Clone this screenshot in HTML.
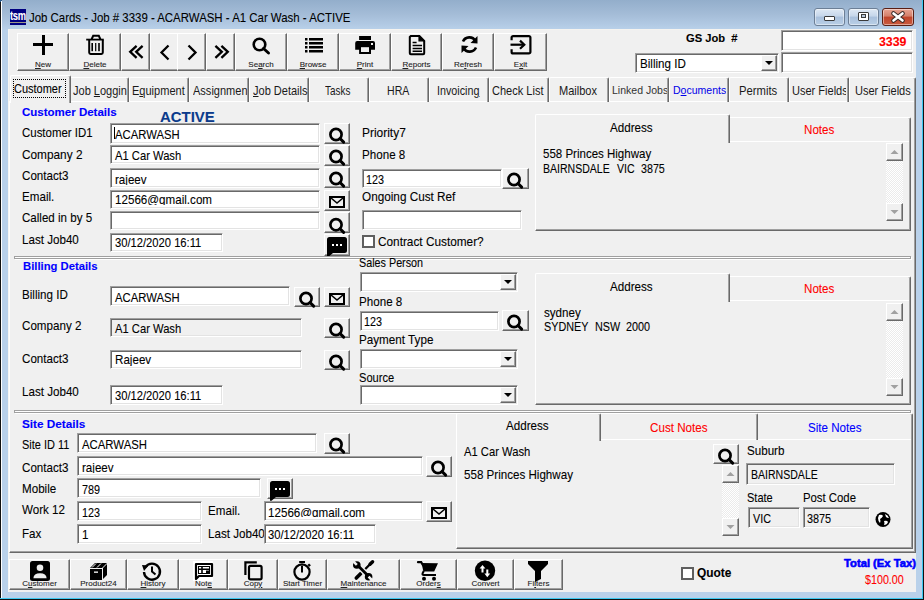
<!DOCTYPE html>
<html><head><meta charset="utf-8"><style>
html,body{margin:0;padding:0;width:924px;height:600px;overflow:hidden;background:#b9d1ea}
body{position:relative;font-family:"Liberation Sans", sans-serif}
body div, body span.t{position:absolute;box-sizing:border-box}
.t{white-space:pre;font-family:"Liberation Sans", sans-serif;-webkit-text-stroke:0.1px currentColor}
.rz{box-sizing:content-box!important;background:#f0f0f0;border:1px solid;border-color:#fff #696969 #696969 #fff;box-shadow:inset -1px -1px #a0a0a0}
.sk{box-sizing:content-box!important;border:1px solid;border-color:#a0a0a0 #fff #fff #a0a0a0;box-shadow:inset 1px 1px #696969, inset -1px -1px #e3e3e3}
.dith{background:repeating-conic-gradient(#fff 0 25%,#ebebeb 0 50%) 0 0/2px 2px}
svg{position:absolute}
</style></head><body>
<div style="left:0px;top:0px;width:924px;height:30px;background:linear-gradient(#93aecb,#a5bdd8 50%,#b9d1ea)"></div>
<div style="left:0px;top:30px;width:924px;height:570px;background:#b9d1ea"></div>
<div style="left:0px;top:0px;width:1px;height:600px;background:#111"></div>
<div style="left:0px;top:0px;width:2px;height:2px;background:#2c5d8e"></div>
<div style="left:1px;top:1px;width:1px;height:598px;background:#fff"></div>
<div style="left:922px;top:0px;width:1px;height:599px;background:#3cc8f0"></div>
<div style="left:923px;top:0px;width:1px;height:600px;background:#111"></div>
<div style="left:0px;top:598px;width:923px;height:1px;background:#3cc8f0"></div>
<div style="left:0px;top:599px;width:924px;height:1px;background:#111"></div>
<div style="left:10px;top:9px;width:16px;height:16px;background:#000080"></div>
<div style="left:10px;top:22px;width:16px;height:1px;background:#9c9888"></div>
<div style="left:10px;top:9px;width:16px;height:13px;overflow:hidden"><span class="t" style="left:0.3px;top:1px;font-size:12px;line-height:12px;color:#fff;font-weight:bold;letter-spacing:-0.4px;transform:scaleX(0.78);transform-origin:0 0">tsm</span></div>
<span class="t" style="left:29.30px;top:12px;font-size:12.53px;line-height:12.53px;color:#000;font-weight:normal;transform:scaleX(0.9126);transform-origin:0 0;">Job Cards - Job # 3339 - ACARWASH - A1 Car Wash - ACTIVE</span>
<div style="left:814px;top:8px;width:31px;height:18px;border:1px solid #6c7f96;border-radius:3px;background:linear-gradient(#dfe9f4,#c5d6ea 45%,#a9c0dc 50%,#b9cfe6 100%);box-shadow:inset 0 0 0 1px rgba(255,255,255,.45)"></div>
<div style="left:848px;top:8px;width:31px;height:18px;border:1px solid #6c7f96;border-radius:3px;background:linear-gradient(#dfe9f4,#c5d6ea 45%,#a9c0dc 50%,#b9cfe6 100%);box-shadow:inset 0 0 0 1px rgba(255,255,255,.45)"></div>
<div style="left:882px;top:8px;width:32px;height:18px;border:1px solid #5a1f14;border-radius:3px;background:linear-gradient(#e8a493,#d47f6a 45%,#c0442b 50%,#c85a3e 100%);box-shadow:inset 0 0 0 1px rgba(255,255,255,.45)"></div>
<div style="left:824px;top:16px;width:11px;height:5px;background:#fff;border:1px solid #3a3a3a;border-radius:1px"></div>
<div style="left:858px;top:12px;width:11px;height:9px;border:1px solid #3a3a3a;background:#fff;border-radius:1px"></div>
<div style="left:861px;top:14px;width:5px;height:4px;border:1px solid #3a3a3a;background:#b8c9dc"></div>
<svg style="position:absolute;left:889px;top:10px" width="18" height="14"><path d="M4.5,3.5 L13.5,10.5 M13.5,3.5 L4.5,10.5" stroke="#3a2a28" stroke-width="4.6" stroke-linecap="round"/><path d="M4.5,3.5 L13.5,10.5 M13.5,3.5 L4.5,10.5" stroke="#fff" stroke-width="2.6" stroke-linecap="round"/></svg>
<div style="left:8px;top:29px;width:908px;height:563px;background:#f0f0f0"></div>
<div style="left:8px;top:29px;width:1px;height:563px;background:#f7f6f3"></div>
<div style="left:8px;top:29px;width:908px;height:1px;background:#f5f3ef"></div>
<div class="rz" style="left:17px;top:33px;width:50px;height:36px;"></div>
<span class="t" style="left:35.00px;top:61px;font-size:8.00px;line-height:8.00px;color:#222;font-weight:normal;"><u>N</u>ew</span>
<div class="rz" style="left:69px;top:33px;width:50px;height:36px;"></div>
<span class="t" style="left:83.44px;top:61px;font-size:8.00px;line-height:8.00px;color:#222;font-weight:normal;"><u>D</u>elete</span>
<div class="rz" style="left:121px;top:33px;width:27px;height:36px;"></div>
<div class="rz" style="left:150px;top:33px;width:27px;height:36px;"></div>
<div class="rz" style="left:177px;top:33px;width:27px;height:36px;"></div>
<div class="rz" style="left:206px;top:33px;width:27px;height:36px;"></div>
<div class="rz" style="left:235px;top:33px;width:50px;height:36px;"></div>
<span class="t" style="left:248.33px;top:61px;font-size:8.00px;line-height:8.00px;color:#222;font-weight:normal;">Se<u>a</u>rch</span>
<div class="rz" style="left:287px;top:33px;width:50px;height:36px;"></div>
<span class="t" style="left:299.66px;top:61px;font-size:8.00px;line-height:8.00px;color:#222;font-weight:normal;"><u>B</u>rowse</span>
<div class="rz" style="left:339px;top:33px;width:50px;height:36px;"></div>
<span class="t" style="left:356.78px;top:61px;font-size:8.00px;line-height:8.00px;color:#222;font-weight:normal;"><u>P</u>rint</span>
<div class="rz" style="left:391px;top:33px;width:49px;height:36px;"></div>
<span class="t" style="left:402.49px;top:61px;font-size:8.00px;line-height:8.00px;color:#222;font-weight:normal;"><u>R</u>eports</span>
<div class="rz" style="left:442px;top:33px;width:50px;height:36px;"></div>
<span class="t" style="left:453.99px;top:61px;font-size:8.00px;line-height:8.00px;color:#222;font-weight:normal;">Re<u>f</u>resh</span>
<div class="rz" style="left:494px;top:33px;width:51px;height:36px;"></div>
<span class="t" style="left:513.83px;top:61px;font-size:8.00px;line-height:8.00px;color:#222;font-weight:normal;">E<u>x</u>it</span>
<div style="left:33px;top:43px;width:20px;height:3px;background:#000"></div>
<div style="left:41.5px;top:35px;width:3px;height:20px;background:#000"></div>
<svg style="position:absolute;left:84px;top:33px;overflow:visible" width="22" height="23"><path d="M7.6,6.2 L9.2,2.8 H14.8 L16.4,6.2" fill="none" stroke="#000" stroke-width="2"/><line x1="2.2" y1="6.6" x2="19.8" y2="6.6" stroke="#000" stroke-width="1.8"/><path d="M5.2,7 V19.6 a1.4,1.4 0 0 0 1.4,1.4 H17.4 a1.4,1.4 0 0 0 1.4,-1.4 V7" fill="none" stroke="#000" stroke-width="2"/><rect x="7.4" y="10" width="1.6" height="8.2"/><rect x="11.1" y="10" width="1.2" height="8.2"/><rect x="14.2" y="10" width="1.6" height="8.2"/></svg>
<svg style="position:absolute;left:129px;top:45px;overflow:visible" width="15" height="14"><polyline points="7.6,0.8 1.2,6.8 7.6,12.8" fill="none" stroke="#000" stroke-width="2.3" stroke-linejoin="miter"/><polyline points="13.6,0.8 7.2,6.8 13.6,12.8" fill="none" stroke="#000" stroke-width="2.3" stroke-linejoin="miter"/></svg>
<svg style="position:absolute;left:160px;top:44.5px;overflow:visible" width="10" height="15"><polyline points="8.5,0.5 1.5,7.5 8.5,14.5" fill="none" stroke="#000" stroke-width="2.3" stroke-linejoin="miter"/></svg>
<svg style="position:absolute;left:187px;top:44.5px;overflow:visible" width="10" height="15"><polyline points="1.5,0.5 8.5,7.5 1.5,14.5" fill="none" stroke="#000" stroke-width="2.3" stroke-linejoin="miter"/></svg>
<svg style="position:absolute;left:214px;top:45px;overflow:visible" width="15" height="14"><polyline points="1.4,0.8 7.8,6.8 1.4,12.8" fill="none" stroke="#000" stroke-width="2.3" stroke-linejoin="miter"/><polyline points="7.4,0.8 13.8,6.8 7.4,12.8" fill="none" stroke="#000" stroke-width="2.3" stroke-linejoin="miter"/></svg>
<svg style="position:absolute;left:252px;top:37px;overflow:visible" width="19" height="18"><circle cx="7.5" cy="7.5" r="5.8" fill="none" stroke="#000" stroke-width="2.6"/><line x1="11.5" y1="11.5" x2="16.5" y2="16" stroke="#000" stroke-width="3" stroke-linecap="round"/></svg>
<svg style="position:absolute;left:305px;top:37px;overflow:visible" width="18" height="16"><rect x="0" y="1" width="2.5" height="2.5"/><rect x="4" y="1" width="14" height="2.5"/><rect x="0" y="5" width="2.5" height="2.5"/><rect x="4" y="5" width="14" height="2.5"/><rect x="0" y="9" width="2.5" height="2.5"/><rect x="4" y="9" width="14" height="2.5"/><rect x="0" y="13" width="2.5" height="2.5"/><rect x="4" y="13" width="14" height="2.5"/></svg>
<svg style="position:absolute;left:355px;top:35px;overflow:visible" width="21" height="20"><rect x="4.1" y="1" width="11.9" height="4"/><path d="M0.2,8 a2,2 0 0 1 2,-2 h15.8 a2,2 0 0 1 2,2 v6.8 h-19.8z"/><rect x="4.1" y="12" width="11.9" height="7"/><rect x="6" y="12.2" width="8" height="4.8" fill="#f0f0f0"/><rect x="16" y="8" width="2" height="2" fill="#f0f0f0"/></svg>
<svg style="position:absolute;left:409px;top:35px;overflow:visible" width="17" height="21"><path d="M1.8,1 h8.6 l4.8,4.8 v12.4 a1,1 0 0 1 -1,1 h-12.4 a1,1 0 0 1 -1,-1 v-16.2 z" fill="none" stroke="#000" stroke-width="2"/><path d="M10,1.2 v4.6 h4.8 z" fill="#000" stroke="#000" stroke-width="1.2"/><path d="M3.6,7.6 h4 M3.6,10.6 h9.4 M3.6,13.4 h9.4 M3.6,16.2 h9.4" stroke="#000" stroke-width="1.5"/></svg>
<svg style="position:absolute;left:460px;top:35px;overflow:visible" width="19" height="19"><path d="M15.5,6 A7,7 0 0 0 3,6.5" fill="none" stroke="#000" stroke-width="2.6"/><polygon points="17.5,1 17.5,8.5 10.5,8" /><path d="M3.5,13 A7,7 0 0 0 16,12.5" fill="none" stroke="#000" stroke-width="2.6"/><polygon points="1.5,18 1.5,10.5 8.5,11" /></svg>
<svg style="position:absolute;left:510px;top:35px;overflow:visible" width="22" height="21"><path d="M1.6,5.2 V2.6 a1.5,1.5 0 0 1 1.5,-1.5 H18.9 a1.5,1.5 0 0 1 1.5,1.5 V16.9 a1.5,1.5 0 0 1 -1.5,1.5 H3.1 a1.5,1.5 0 0 1 -1.5,-1.5 V14.2" fill="none" stroke="#000" stroke-width="2.2"/><path d="M0.5,9.7 h13" stroke="#000" stroke-width="2.2"/><polyline points="10,5.6 14.3,9.7 10,13.8" fill="none" stroke="#000" stroke-width="2.2"/></svg>
<span class="t" style="left:685.70px;top:33px;font-size:11.30px;line-height:11.30px;color:#000;font-weight:bold;transform:scaleX(0.9900);transform-origin:0 0;">GS Job&nbsp; #</span>
<div class="sk" style="left:781px;top:30px;width:130px;height:19px;background:#fff;"></div>
<span class="t" style="left:879.30px;top:36px;font-size:12.20px;line-height:12.20px;color:#f00;font-weight:bold;transform:scaleX(1.0132);transform-origin:0 0;">3339</span>
<div class="sk" style="left:635px;top:53px;width:142px;height:18px;background:#fff;"></div>
<div class="rz" style="left:761px;top:55px;width:14px;height:14px;"></div>
<svg style="position:absolute;left:0;top:0;overflow:visible" width="1" height="1"><polygon points="765,61.0 773,61.0 769,65.0" fill="#000"/></svg>
<span class="t" style="left:639.80px;top:58px;font-size:12.53px;line-height:12.53px;color:#000;font-weight:normal;transform:scaleX(0.9280);transform-origin:0 0;">Billing ID</span>
<div class="sk" style="left:781px;top:52px;width:130px;height:19px;background:#fff;"></div>
<div style="left:9px;top:101px;width:907px;height:452px;border-left:1px solid #fff;border-top:1px solid #fff;border-right:1px solid #696969;border-bottom:1px solid #696969;box-shadow:inset -1px -1px #a0a0a0"></div>
<div style="left:69px;top:77px;width:60px;height:25px;border-left:1px solid #fff;border-top:1px solid #fff;border-right:1px solid #696969;box-shadow:inset -1px 0 #a0a0a0;border-radius:2px 2px 0 0"></div>
<div style="left:129px;top:77px;width:60px;height:25px;border-left:1px solid #fff;border-top:1px solid #fff;border-right:1px solid #696969;box-shadow:inset -1px 0 #a0a0a0;border-radius:2px 2px 0 0"></div>
<div style="left:189px;top:77px;width:60px;height:25px;border-left:1px solid #fff;border-top:1px solid #fff;border-right:1px solid #696969;box-shadow:inset -1px 0 #a0a0a0;border-radius:2px 2px 0 0"></div>
<div style="left:249px;top:77px;width:60px;height:25px;border-left:1px solid #fff;border-top:1px solid #fff;border-right:1px solid #696969;box-shadow:inset -1px 0 #a0a0a0;border-radius:2px 2px 0 0"></div>
<div style="left:309px;top:77px;width:60px;height:25px;border-left:1px solid #fff;border-top:1px solid #fff;border-right:1px solid #696969;box-shadow:inset -1px 0 #a0a0a0;border-radius:2px 2px 0 0"></div>
<div style="left:369px;top:77px;width:60px;height:25px;border-left:1px solid #fff;border-top:1px solid #fff;border-right:1px solid #696969;box-shadow:inset -1px 0 #a0a0a0;border-radius:2px 2px 0 0"></div>
<div style="left:429px;top:77px;width:60px;height:25px;border-left:1px solid #fff;border-top:1px solid #fff;border-right:1px solid #696969;box-shadow:inset -1px 0 #a0a0a0;border-radius:2px 2px 0 0"></div>
<div style="left:489px;top:77px;width:60px;height:25px;border-left:1px solid #fff;border-top:1px solid #fff;border-right:1px solid #696969;box-shadow:inset -1px 0 #a0a0a0;border-radius:2px 2px 0 0"></div>
<div style="left:549px;top:77px;width:60px;height:25px;border-left:1px solid #fff;border-top:1px solid #fff;border-right:1px solid #696969;box-shadow:inset -1px 0 #a0a0a0;border-radius:2px 2px 0 0"></div>
<div style="left:609px;top:77px;width:60px;height:25px;border-left:1px solid #fff;border-top:1px solid #fff;border-right:1px solid #696969;box-shadow:inset -1px 0 #a0a0a0;border-radius:2px 2px 0 0"></div>
<div style="left:669px;top:77px;width:60px;height:25px;border-left:1px solid #fff;border-top:1px solid #fff;border-right:1px solid #696969;box-shadow:inset -1px 0 #a0a0a0;border-radius:2px 2px 0 0"></div>
<div style="left:729px;top:77px;width:60px;height:25px;border-left:1px solid #fff;border-top:1px solid #fff;border-right:1px solid #696969;box-shadow:inset -1px 0 #a0a0a0;border-radius:2px 2px 0 0"></div>
<div style="left:789px;top:77px;width:60px;height:25px;border-left:1px solid #fff;border-top:1px solid #fff;border-right:1px solid #696969;box-shadow:inset -1px 0 #a0a0a0;border-radius:2px 2px 0 0"></div>
<div style="left:849px;top:77px;width:67px;height:25px;border-left:1px solid #fff;border-top:1px solid #fff;border-right:1px solid #696969;box-shadow:inset -1px 0 #a0a0a0;border-radius:2px 2px 0 0"></div>
<div style="left:10px;top:75px;width:61px;height:28px;background:#f0f0f0;border-left:1px solid #fff;border-top:1px solid #fff;border-right:1px solid #696969;box-shadow:inset -1px 0 #a0a0a0;border-radius:2px 2px 0 0"></div>
<div style="left:13px;top:79px;width:53px;height:19px;border:1px dotted #000"></div>
<span class="t" style="left:13.80px;top:84px;font-size:11.88px;line-height:11.88px;color:#000;font-weight:normal;transform:scaleX(0.9248);transform-origin:0 0;">Customer</span>
<div style="left:72.5px;top:83px;width:54px;height:17.88px;overflow:hidden"><span class="t" style="left:0.00px;top:3px;font-size:11.88px;line-height:11.88px;color:#1a1a1a;-webkit-text-stroke:0;transform:scaleX(0.9283);transform-origin:0 0;">Job <u>L</u>ogging</span></div>
<div style="left:132.4px;top:83px;width:55px;height:17.88px;overflow:hidden"><span class="t" style="left:0.00px;top:3px;font-size:11.88px;line-height:11.88px;color:#1a1a1a;-webkit-text-stroke:0;transform:scaleX(0.9283);transform-origin:0 0;">E<u>q</u>uipment</span></div>
<div style="left:192.5px;top:83px;width:54px;height:17.88px;overflow:hidden"><span class="t" style="left:0.00px;top:3px;font-size:11.88px;line-height:11.88px;color:#1a1a1a;-webkit-text-stroke:0;transform:scaleX(0.9283);transform-origin:0 0;">Assignment</span></div>
<div style="left:252.5px;top:83px;width:55px;height:17.88px;overflow:hidden"><span class="t" style="left:0.00px;top:3px;font-size:11.88px;line-height:11.88px;color:#1a1a1a;-webkit-text-stroke:0;transform:scaleX(0.9283);transform-origin:0 0;"><u>J</u>ob Details</span></div>
<div style="left:309px;top:83px;width:58px;height:17.88px;overflow:hidden"><span class="t" style="left:16.35px;top:3px;font-size:11.88px;line-height:11.88px;color:#1a1a1a;-webkit-text-stroke:0;transform:scaleX(0.8354);transform-origin:0 0;">Tasks</span></div>
<div style="left:369px;top:83px;width:58px;height:17.88px;overflow:hidden"><span class="t" style="left:17.85px;top:3px;font-size:11.88px;line-height:11.88px;color:#1a1a1a;-webkit-text-stroke:0;transform:scaleX(0.8911);transform-origin:0 0;">HRA</span></div>
<div style="left:429px;top:83px;width:58px;height:17.88px;overflow:hidden"><span class="t" style="left:7.83px;top:3px;font-size:11.88px;line-height:11.88px;color:#1a1a1a;-webkit-text-stroke:0;transform:scaleX(0.9051);transform-origin:0 0;">Invoicin<u>g</u></span></div>
<div style="left:489px;top:83px;width:58px;height:17.88px;overflow:hidden"><span class="t" style="left:3.32px;top:3px;font-size:11.88px;line-height:11.88px;color:#1a1a1a;-webkit-text-stroke:0;transform:scaleX(0.9283);transform-origin:0 0;">Check List</span></div>
<div style="left:549px;top:83px;width:58px;height:17.88px;overflow:hidden"><span class="t" style="left:10.05px;top:3px;font-size:11.88px;line-height:11.88px;color:#1a1a1a;-webkit-text-stroke:0;transform:scaleX(0.9283);transform-origin:0 0;">Mailbox</span></div>
<div style="left:612.3px;top:82px;width:54.5px;height:17.34px;overflow:hidden"><span class="t" style="left:0.00px;top:3px;font-size:11.34px;line-height:11.34px;color:#333;-webkit-text-stroke:0;transform:scaleX(0.9292);transform-origin:0 0;">Linked Jobs</span></div>
<div style="left:672.6px;top:82px;width:53.5px;height:17.34px;overflow:hidden"><span class="t" style="left:0.00px;top:3px;font-size:11.34px;line-height:11.34px;color:#0000e8;-webkit-text-stroke:0;transform:scaleX(0.9292);transform-origin:0 0;">D<u>o</u>cuments</span></div>
<div style="left:729px;top:82px;width:58px;height:18.53px;overflow:hidden"><span class="t" style="left:9.93px;top:3px;font-size:12.53px;line-height:12.53px;color:#1a1a1a;-webkit-text-stroke:0;transform:scaleX(0.9002);transform-origin:0 0;">Permits</span></div>
<div style="left:792.1px;top:83px;width:53.5px;height:17.88px;overflow:hidden"><span class="t" style="left:0.00px;top:3px;font-size:11.88px;line-height:11.88px;color:#1a1a1a;-webkit-text-stroke:0;transform:scaleX(0.9283);transform-origin:0 0;">User Fields</span></div>
<div style="left:854.5px;top:83px;width:60px;height:17.88px;overflow:hidden"><span class="t" style="left:0.00px;top:3px;font-size:11.88px;line-height:11.88px;color:#1a1a1a;-webkit-text-stroke:0;transform:scaleX(0.9283);transform-origin:0 0;">User Fields</span></div>
<span class="t" style="left:22.00px;top:107px;font-size:11.40px;line-height:11.40px;color:#0000ff;font-weight:bold;transform:scaleX(1.0100);transform-origin:0 0;">Customer Details</span>
<span class="t" style="left:160.00px;top:109px;font-size:15.00px;line-height:15.00px;color:#0b3b8c;font-weight:bold;transform:scaleX(0.9945);transform-origin:0 0;">ACTIVE</span>
<span class="t" style="left:21.80px;top:127px;font-size:12.53px;line-height:12.53px;color:#000;font-weight:normal;transform:scaleX(0.9144);transform-origin:0 0;">Customer ID1</span>
<span class="t" style="left:21.80px;top:149px;font-size:12.53px;line-height:12.53px;color:#000;font-weight:normal;transform:scaleX(0.9449);transform-origin:0 0;">Company 2</span>
<span class="t" style="left:21.80px;top:170px;font-size:12.53px;line-height:12.53px;color:#000;font-weight:normal;transform:scaleX(0.9280);transform-origin:0 0;">Contact3</span>
<span class="t" style="left:21.80px;top:191px;font-size:12.53px;line-height:12.53px;color:#000;font-weight:normal;transform:scaleX(0.9280);transform-origin:0 0;">Email.</span>
<span class="t" style="left:21.80px;top:212px;font-size:12.53px;line-height:12.53px;color:#000;font-weight:normal;transform:scaleX(0.9243);transform-origin:0 0;">Called in by 5</span>
<span class="t" style="left:21.80px;top:234px;font-size:12.53px;line-height:12.53px;color:#000;font-weight:normal;transform:scaleX(0.9281);transform-origin:0 0;">Last Job40</span>
<div class="sk" style="left:110px;top:123px;width:208px;height:19px;background:#fff;"></div>
<div style="left:112px;top:125px;width:206px;height:15px;overflow:hidden"><span class="t" style="left:3.10px;top:4px;font-size:12.53px;line-height:12.53px;color:#000;transform:scaleX(0.9016);transform-origin:0 0;">ACARWASH</span></div>
<div style="left:114px;top:127px;width:1px;height:12px;background:#000"></div>
<div class="sk" style="left:110px;top:145px;width:208px;height:17px;background:#fff;"></div>
<div style="left:112px;top:147px;width:206px;height:13px;overflow:hidden"><span class="t" style="left:2.80px;top:3px;font-size:12.53px;line-height:12.53px;color:#000;transform:scaleX(0.8949);transform-origin:0 0;">A1 Car Wash</span></div>
<div class="sk" style="left:110px;top:168px;width:208px;height:18px;background:#fff;"></div>
<div style="left:112px;top:170px;width:206px;height:15px;overflow:hidden"><span class="t" style="left:2.80px;top:4px;font-size:12.53px;line-height:12.53px;color:#000;transform:scaleX(0.9281);transform-origin:0 0;">rajeev</span></div>
<div class="sk" style="left:110px;top:190px;width:208px;height:17px;background:#fff;"></div>
<div style="left:112px;top:192px;width:206px;height:13px;overflow:hidden"><span class="t" style="left:2.80px;top:2px;font-size:12.53px;line-height:12.53px;color:#000;transform:scaleX(0.9281);transform-origin:0 0;">12566@gmail.com</span></div>
<div class="sk" style="left:110px;top:211px;width:208px;height:17px;background:#fff;"></div>
<div class="sk" style="left:110px;top:233px;width:111px;height:17px;background:#fff;"></div>
<div style="left:112px;top:235px;width:109px;height:13px;overflow:hidden"><span class="t" style="left:2.80px;top:2px;font-size:12.53px;line-height:12.53px;color:#000;transform:scaleX(0.8944);transform-origin:0 0;">30/12/2020 16:11</span></div>
<div class="rz" style="left:324px;top:123px;width:24px;height:19px;"></div>
<svg style="position:absolute;left:0;top:0;overflow:visible" width="1" height="1"><circle cx="336" cy="134.5" r="5.6" fill="none" stroke="#000" stroke-width="2.7"/><line x1="340.032" y1="138.532" x2="343.632" y2="142.132" stroke="#000" stroke-width="3" stroke-linecap="round"/></svg>
<div class="rz" style="left:324px;top:145px;width:24px;height:19px;"></div>
<svg style="position:absolute;left:0;top:0;overflow:visible" width="1" height="1"><circle cx="336" cy="156.5" r="5.6" fill="none" stroke="#000" stroke-width="2.7"/><line x1="340.032" y1="160.532" x2="343.632" y2="164.132" stroke="#000" stroke-width="3" stroke-linecap="round"/></svg>
<div class="rz" style="left:324px;top:167px;width:24px;height:19px;"></div>
<svg style="position:absolute;left:0;top:0;overflow:visible" width="1" height="1"><circle cx="336" cy="178.5" r="5.6" fill="none" stroke="#000" stroke-width="2.7"/><line x1="340.032" y1="182.532" x2="343.632" y2="186.132" stroke="#000" stroke-width="3" stroke-linecap="round"/></svg>
<div class="rz" style="left:324px;top:190px;width:24px;height:19px;"></div>
<svg style="position:absolute;left:0;top:0;overflow:visible" width="1" height="1"><rect x="330" y="197" width="14" height="10" fill="none" stroke="#000" stroke-width="2"/><polyline points="331,198 337.0,203.0 343,198" fill="none" stroke="#000" stroke-width="1.6"/></svg>
<div class="rz" style="left:324px;top:212px;width:24px;height:19px;"></div>
<svg style="position:absolute;left:0;top:0;overflow:visible" width="1" height="1"><circle cx="336" cy="224.7" r="5.6" fill="none" stroke="#000" stroke-width="2.7"/><line x1="340.032" y1="228.732" x2="343.632" y2="232.332" stroke="#000" stroke-width="3" stroke-linecap="round"/></svg>
<div class="rz" style="left:324px;top:234px;width:24px;height:20px;"></div>
<svg style="position:absolute;left:0;top:0;overflow:visible" width="1" height="1"><path d="M329.5,237 h15 a2.5,2.5 0 0 1 2.5,2.5 v11 a2.5,2.5 0 0 1 -2.5,2.5 h-11.5 l-4.5,3.8 h-1.5 v-17.3 a2.5,2.5 0 0 1 2.5,-2.5 z" fill="#000"/><rect x="332" y="244" width="2" height="2" fill="#fff"/><rect x="336" y="244" width="2" height="2" fill="#fff"/><rect x="340" y="244" width="2" height="2" fill="#fff"/></svg>
<span class="t" style="left:361.80px;top:127px;font-size:12.53px;line-height:12.53px;color:#000;font-weight:normal;transform:scaleX(0.9543);transform-origin:0 0;">Priority7</span>
<span class="t" style="left:361.80px;top:149px;font-size:12.53px;line-height:12.53px;color:#000;font-weight:normal;transform:scaleX(0.9281);transform-origin:0 0;">Phone 8</span>
<div class="sk" style="left:362px;top:169px;width:138px;height:17px;background:#fff;"></div>
<div style="left:364px;top:171px;width:136px;height:13px;overflow:hidden"><span class="t" style="left:2.30px;top:3px;font-size:12.53px;line-height:12.53px;color:#000;transform:scaleX(0.8631);transform-origin:0 0;">123</span></div>
<div class="rz" style="left:502px;top:168px;width:25px;height:19px;"></div>
<svg style="position:absolute;left:0;top:0;overflow:visible" width="1" height="1"><circle cx="514" cy="179.5" r="5.6" fill="none" stroke="#000" stroke-width="2.7"/><line x1="518.032" y1="183.532" x2="521.6320000000001" y2="187.132" stroke="#000" stroke-width="3" stroke-linecap="round"/></svg>
<span class="t" style="left:361.80px;top:191px;font-size:12.53px;line-height:12.53px;color:#000;font-weight:normal;transform:scaleX(0.9385);transform-origin:0 0;">Ongoing Cust Ref</span>
<div class="sk" style="left:362px;top:210px;width:158px;height:18px;background:#fff;"></div>
<div style="left:362px;top:235px;width:13px;height:13px;border:2px solid #5f5f5f;background:#fff"></div>
<span class="t" style="left:378.10px;top:236px;font-size:12.53px;line-height:12.53px;color:#000;font-weight:normal;transform:scaleX(0.9433);transform-origin:0 0;">Contract Customer?</span>
<div style="left:535px;top:141px;width:376px;height:90px;border-left:1px solid #fff;border-top:1px solid #fff;border-right:1px solid #696969;border-bottom:1px solid #696969;box-shadow:inset -1px -1px #a0a0a0"></div>
<div style="left:728px;top:117px;width:183px;height:25px;border-left:1px solid #fff;border-top:1px solid #fff;border-right:1px solid #696969;box-shadow:inset -1px 0 #a0a0a0;border-radius:2px 2px 0 0"></div>
<div style="left:535px;top:114px;width:195px;height:29px;background:#f0f0f0;border-left:1px solid #fff;border-top:1px solid #fff;border-right:1px solid #696969;box-shadow:inset -1px 0 #a0a0a0;border-radius:2px 2px 0 0"></div>
<span class="t" style="left:610.22px;top:122px;font-size:12.53px;line-height:12.53px;color:#000;font-weight:normal;transform:scaleX(0.9281);transform-origin:0 0;">Address</span>
<span class="t" style="left:804.35px;top:124px;font-size:12.53px;line-height:12.53px;color:#f00;font-weight:normal;transform:scaleX(0.9280);transform-origin:0 0;">Notes</span>
<span class="t" style="left:542.90px;top:148px;font-size:12.53px;line-height:12.53px;color:#000;font-weight:normal;transform:scaleX(0.9198);transform-origin:0 0;">558 Princes Highway</span>
<span class="t" style="left:542.90px;top:163px;font-size:12.53px;line-height:12.53px;color:#000;font-weight:normal;transform:scaleX(0.8410);transform-origin:0 0;">BAIRNSDALE</span>
<span class="t" style="left:616.70px;top:163px;font-size:12.53px;line-height:12.53px;color:#000;font-weight:normal;transform:scaleX(0.8446);transform-origin:0 0;">VIC</span>
<span class="t" style="left:640.50px;top:163px;font-size:12.53px;line-height:12.53px;color:#000;font-weight:normal;transform:scaleX(0.8559);transform-origin:0 0;">3875</span>
<div class="dith" style="left:886px;top:143px;width:17px;height:78px"></div>
<div class="rz" style="left:886px;top:143px;width:15px;height:16px;"></div>
<div class="rz" style="left:886px;top:203px;width:15px;height:16px;"></div>
<svg style="position:absolute;left:0;top:0;overflow:visible" width="1" height="1"><polygon points="890.5,154 898.5,154 894.5,150" fill="#a0a0a0"/><polygon points="890.5,210 898.5,210 894.5,214" fill="#a0a0a0"/></svg>
<div style="left:14px;top:256px;width:897px;height:3px;border:1px solid #a0a0a0;box-shadow:1px 1px #fff, inset 1px 1px #fff"></div>
<span class="t" style="left:22.70px;top:261px;font-size:11.40px;line-height:11.40px;color:#0000ff;font-weight:bold;transform:scaleX(0.9884);transform-origin:0 0;">Billing Details</span>
<span class="t" style="left:21.80px;top:289px;font-size:12.53px;line-height:12.53px;color:#000;font-weight:normal;transform:scaleX(0.9280);transform-origin:0 0;">Billing ID</span>
<span class="t" style="left:21.80px;top:320px;font-size:12.53px;line-height:12.53px;color:#000;font-weight:normal;transform:scaleX(0.9280);transform-origin:0 0;">Company 2</span>
<span class="t" style="left:21.80px;top:353px;font-size:12.53px;line-height:12.53px;color:#000;font-weight:normal;transform:scaleX(0.9280);transform-origin:0 0;">Contact3</span>
<span class="t" style="left:21.80px;top:386px;font-size:12.53px;line-height:12.53px;color:#000;font-weight:normal;transform:scaleX(0.9281);transform-origin:0 0;">Last Job40</span>
<div class="sk" style="left:110px;top:286px;width:178px;height:18px;background:#fff;"></div>
<div style="left:112px;top:288px;width:176px;height:14px;overflow:hidden"><span class="t" style="left:2.70px;top:4px;font-size:12.53px;line-height:12.53px;color:#000;transform:scaleX(0.9016);transform-origin:0 0;">ACARWASH</span></div>
<div class="rz" style="left:294px;top:287px;width:24px;height:18px;"></div>
<svg style="position:absolute;left:0;top:0;overflow:visible" width="1" height="1"><circle cx="306" cy="298.5" r="5.6" fill="none" stroke="#000" stroke-width="2.7"/><line x1="310.032" y1="302.532" x2="313.632" y2="306.132" stroke="#000" stroke-width="3" stroke-linecap="round"/></svg>
<div class="rz" style="left:324px;top:287px;width:24px;height:18px;"></div>
<svg style="position:absolute;left:0;top:0;overflow:visible" width="1" height="1"><rect x="330" y="294" width="14" height="10" fill="none" stroke="#000" stroke-width="2"/><polyline points="331,295 337.0,300.0 343,295" fill="none" stroke="#000" stroke-width="1.6"/></svg>
<div class="sk" style="left:110px;top:318px;width:190px;height:17px;background:#f0f0f0;"></div>
<div style="left:112px;top:320px;width:188px;height:13px;overflow:hidden"><span class="t" style="left:2.80px;top:3px;font-size:12.53px;line-height:12.53px;color:#000;transform:scaleX(0.8949);transform-origin:0 0;">A1 Car Wash</span></div>
<div class="rz" style="left:324px;top:318px;width:24px;height:18px;"></div>
<svg style="position:absolute;left:0;top:0;overflow:visible" width="1" height="1"><circle cx="336" cy="329.5" r="5.6" fill="none" stroke="#000" stroke-width="2.7"/><line x1="340.032" y1="333.532" x2="343.632" y2="337.132" stroke="#000" stroke-width="3" stroke-linecap="round"/></svg>
<div class="sk" style="left:110px;top:350px;width:190px;height:17px;background:#fff;"></div>
<div style="left:112px;top:352px;width:188px;height:14px;overflow:hidden"><span class="t" style="left:2.80px;top:2px;font-size:12.53px;line-height:12.53px;color:#000;transform:scaleX(0.9280);transform-origin:0 0;">Rajeev</span></div>
<div class="rz" style="left:324px;top:350px;width:24px;height:18px;"></div>
<svg style="position:absolute;left:0;top:0;overflow:visible" width="1" height="1"><circle cx="336" cy="361.5" r="5.6" fill="none" stroke="#000" stroke-width="2.7"/><line x1="340.032" y1="365.532" x2="343.632" y2="369.132" stroke="#000" stroke-width="3" stroke-linecap="round"/></svg>
<div class="sk" style="left:110px;top:385px;width:111px;height:18px;background:#fff;"></div>
<div style="left:112px;top:387px;width:109px;height:14px;overflow:hidden"><span class="t" style="left:2.80px;top:3px;font-size:12.53px;line-height:12.53px;color:#000;transform:scaleX(0.8944);transform-origin:0 0;">30/12/2020 16:11</span></div>
<span class="t" style="left:358.90px;top:257px;font-size:12.53px;line-height:12.53px;color:#000;font-weight:normal;transform:scaleX(0.8608);transform-origin:0 0;">Sales Person</span>
<div class="sk" style="left:360px;top:272px;width:156px;height:18px;background:#fff;"></div>
<div class="rz" style="left:500px;top:274px;width:14px;height:14px;"></div>
<svg style="position:absolute;left:0;top:0;overflow:visible" width="1" height="1"><polygon points="504,280.0 512,280.0 508,284.0" fill="#000"/></svg>
<span class="t" style="left:358.90px;top:296px;font-size:12.53px;line-height:12.53px;color:#000;font-weight:normal;transform:scaleX(0.9281);transform-origin:0 0;">Phone 8</span>
<div class="sk" style="left:360px;top:311px;width:137px;height:18px;background:#fff;"></div>
<div style="left:362px;top:313px;width:135px;height:14px;overflow:hidden"><span class="t" style="left:1.60px;top:3px;font-size:12.53px;line-height:12.53px;color:#000;transform:scaleX(0.8631);transform-origin:0 0;">123</span></div>
<div class="rz" style="left:502px;top:310px;width:25px;height:19px;"></div>
<svg style="position:absolute;left:0;top:0;overflow:visible" width="1" height="1"><circle cx="514" cy="321.5" r="5.6" fill="none" stroke="#000" stroke-width="2.7"/><line x1="518.032" y1="325.532" x2="521.6320000000001" y2="329.132" stroke="#000" stroke-width="3" stroke-linecap="round"/></svg>
<span class="t" style="left:358.90px;top:334px;font-size:12.53px;line-height:12.53px;color:#000;font-weight:normal;transform:scaleX(0.9326);transform-origin:0 0;">Payment Type</span>
<div class="sk" style="left:360px;top:349px;width:156px;height:18px;background:#fff;"></div>
<div class="rz" style="left:500px;top:351px;width:14px;height:14px;"></div>
<svg style="position:absolute;left:0;top:0;overflow:visible" width="1" height="1"><polygon points="504,357.0 512,357.0 508,361.0" fill="#000"/></svg>
<span class="t" style="left:358.90px;top:372px;font-size:12.53px;line-height:12.53px;color:#000;font-weight:normal;transform:scaleX(0.8888);transform-origin:0 0;">Source</span>
<div class="sk" style="left:360px;top:385px;width:156px;height:18px;background:#fff;"></div>
<div class="rz" style="left:500px;top:387px;width:14px;height:14px;"></div>
<svg style="position:absolute;left:0;top:0;overflow:visible" width="1" height="1"><polygon points="504,393.0 512,393.0 508,397.0" fill="#000"/></svg>
<div style="left:535px;top:300px;width:376px;height:105px;border-left:1px solid #fff;border-top:1px solid #fff;border-right:1px solid #696969;border-bottom:1px solid #696969;box-shadow:inset -1px -1px #a0a0a0"></div>
<div style="left:728px;top:276px;width:183px;height:25px;border-left:1px solid #fff;border-top:1px solid #fff;border-right:1px solid #696969;box-shadow:inset -1px 0 #a0a0a0;border-radius:2px 2px 0 0"></div>
<div style="left:535px;top:273px;width:195px;height:29px;background:#f0f0f0;border-left:1px solid #fff;border-top:1px solid #fff;border-right:1px solid #696969;box-shadow:inset -1px 0 #a0a0a0;border-radius:2px 2px 0 0"></div>
<span class="t" style="left:610.22px;top:281px;font-size:12.53px;line-height:12.53px;color:#000;font-weight:normal;transform:scaleX(0.9281);transform-origin:0 0;">Address</span>
<span class="t" style="left:804.35px;top:283px;font-size:12.53px;line-height:12.53px;color:#f00;font-weight:normal;transform:scaleX(0.9280);transform-origin:0 0;">Notes</span>
<span class="t" style="left:543.70px;top:307px;font-size:12.53px;line-height:12.53px;color:#000;font-weight:normal;transform:scaleX(0.9280);transform-origin:0 0;">sydney</span>
<span class="t" style="left:543.70px;top:321px;font-size:12.53px;line-height:12.53px;color:#000;font-weight:normal;transform:scaleX(0.8631);transform-origin:0 0;">SYDNEY</span>
<span class="t" style="left:594.55px;top:321px;font-size:12.53px;line-height:12.53px;color:#000;font-weight:normal;transform:scaleX(0.8630);transform-origin:0 0;">NSW</span>
<span class="t" style="left:626.22px;top:321px;font-size:12.53px;line-height:12.53px;color:#000;font-weight:normal;transform:scaleX(0.8631);transform-origin:0 0;">2000</span>
<div class="dith" style="left:886px;top:303px;width:17px;height:93px"></div>
<div class="rz" style="left:886px;top:303px;width:15px;height:16px;"></div>
<div class="rz" style="left:886px;top:378px;width:15px;height:16px;"></div>
<svg style="position:absolute;left:0;top:0;overflow:visible" width="1" height="1"><polygon points="890.5,314 898.5,314 894.5,310" fill="#a0a0a0"/><polygon points="890.5,385 898.5,385 894.5,389" fill="#a0a0a0"/></svg>
<div style="left:14px;top:410px;width:897px;height:3px;border:1px solid #a0a0a0;box-shadow:1px 1px #fff, inset 1px 1px #fff"></div>
<span class="t" style="left:21.70px;top:419px;font-size:11.40px;line-height:11.40px;color:#0000ff;font-weight:bold;transform:scaleX(1.0316);transform-origin:0 0;">Site Details</span>
<span class="t" style="left:21.80px;top:439px;font-size:12.53px;line-height:12.53px;color:#000;font-weight:normal;transform:scaleX(0.8766);transform-origin:0 0;">Site ID 11</span>
<span class="t" style="left:21.80px;top:462px;font-size:12.53px;line-height:12.53px;color:#000;font-weight:normal;transform:scaleX(0.9280);transform-origin:0 0;">Contact3</span>
<span class="t" style="left:21.80px;top:483px;font-size:12.53px;line-height:12.53px;color:#000;font-weight:normal;transform:scaleX(0.9281);transform-origin:0 0;">Mobile</span>
<span class="t" style="left:21.80px;top:504px;font-size:12.53px;line-height:12.53px;color:#000;font-weight:normal;transform:scaleX(0.9280);transform-origin:0 0;">Work 12</span>
<span class="t" style="left:21.80px;top:528px;font-size:12.53px;line-height:12.53px;color:#000;font-weight:normal;transform:scaleX(0.9280);transform-origin:0 0;">Fax</span>
<span class="t" style="left:207.70px;top:505px;font-size:12.53px;line-height:12.53px;color:#000;font-weight:normal;transform:scaleX(0.9280);transform-origin:0 0;">Email.</span>
<span class="t" style="left:207.70px;top:528px;font-size:12.53px;line-height:12.53px;color:#000;font-weight:normal;transform:scaleX(0.9281);transform-origin:0 0;">Last Job40</span>
<div class="sk" style="left:77px;top:433px;width:238px;height:18px;background:#fff;"></div>
<div style="left:79px;top:435px;width:236px;height:14px;overflow:hidden"><span class="t" style="left:2.70px;top:4px;font-size:12.53px;line-height:12.53px;color:#000;transform:scaleX(0.9072);transform-origin:0 0;">ACARWASH</span></div>
<div class="rz" style="left:324px;top:433px;width:24px;height:19px;"></div>
<svg style="position:absolute;left:0;top:0;overflow:visible" width="1" height="1"><circle cx="336" cy="444.5" r="5.6" fill="none" stroke="#000" stroke-width="2.7"/><line x1="340.032" y1="448.532" x2="343.632" y2="452.132" stroke="#000" stroke-width="3" stroke-linecap="round"/></svg>
<div class="sk" style="left:77px;top:456px;width:344px;height:18px;background:#fff;"></div>
<div style="left:79px;top:458px;width:342px;height:15px;overflow:hidden"><span class="t" style="left:2.70px;top:4px;font-size:12.53px;line-height:12.53px;color:#000;transform:scaleX(0.9281);transform-origin:0 0;">rajeev</span></div>
<div class="rz" style="left:426px;top:456px;width:24px;height:19px;"></div>
<svg style="position:absolute;left:0;top:0;overflow:visible" width="1" height="1"><circle cx="438" cy="467.5" r="5.6" fill="none" stroke="#000" stroke-width="2.7"/><line x1="442.032" y1="471.532" x2="445.632" y2="475.132" stroke="#000" stroke-width="3" stroke-linecap="round"/></svg>
<div class="sk" style="left:77px;top:478px;width:182px;height:18px;background:#fff;"></div>
<div style="left:79px;top:480px;width:180px;height:14px;overflow:hidden"><span class="t" style="left:2.70px;top:4px;font-size:12.53px;line-height:12.53px;color:#000;transform:scaleX(0.8631);transform-origin:0 0;">789</span></div>
<div class="rz" style="left:267px;top:478px;width:24px;height:19px;"></div>
<svg style="position:absolute;left:0;top:0;overflow:visible" width="1" height="1"><path d="M272.5,481 h15 a2.5,2.5 0 0 1 2.5,2.5 v11 a2.5,2.5 0 0 1 -2.5,2.5 h-11.5 l-4.5,3.8 h-1.5 v-17.3 a2.5,2.5 0 0 1 2.5,-2.5 z" fill="#000"/><rect x="275" y="488" width="2" height="2" fill="#fff"/><rect x="279" y="488" width="2" height="2" fill="#fff"/><rect x="283" y="488" width="2" height="2" fill="#fff"/></svg>
<div class="sk" style="left:77px;top:501px;width:123px;height:18px;background:#fff;"></div>
<div style="left:79px;top:503px;width:121px;height:14px;overflow:hidden"><span class="t" style="left:2.70px;top:4px;font-size:12.53px;line-height:12.53px;color:#000;transform:scaleX(0.8631);transform-origin:0 0;">123</span></div>
<div class="sk" style="left:264px;top:501px;width:157px;height:18px;background:#fff;"></div>
<div style="left:266px;top:503px;width:155px;height:14px;overflow:hidden"><span class="t" style="left:1.80px;top:4px;font-size:12.53px;line-height:12.53px;color:#000;transform:scaleX(0.9281);transform-origin:0 0;">12566@gmail.com</span></div>
<div class="rz" style="left:426px;top:501px;width:24px;height:19px;"></div>
<svg style="position:absolute;left:0;top:0;overflow:visible" width="1" height="1"><rect x="432" y="508" width="14" height="10" fill="none" stroke="#000" stroke-width="2"/><polyline points="433,509 439.0,514.0 445,509" fill="none" stroke="#000" stroke-width="1.6"/></svg>
<div class="sk" style="left:77px;top:524px;width:123px;height:18px;background:#fff;"></div>
<div style="left:79px;top:526px;width:121px;height:14px;overflow:hidden"><span class="t" style="left:2.70px;top:3px;font-size:12.53px;line-height:12.53px;color:#000;transform:scaleX(0.9281);transform-origin:0 0;">1</span></div>
<div class="sk" style="left:264px;top:524px;width:110px;height:18px;background:#fff;"></div>
<div style="left:266px;top:526px;width:108px;height:14px;overflow:hidden"><span class="t" style="left:2.30px;top:3px;font-size:12.53px;line-height:12.53px;color:#000;transform:scaleX(0.8944);transform-origin:0 0;">30/12/2020 16:11</span></div>
<div style="left:456px;top:439px;width:457px;height:110px;border-left:1px solid #fff;border-top:1px solid #fff;border-right:1px solid #696969;border-bottom:1px solid #696969;box-shadow:inset -1px -1px #a0a0a0"></div>
<div style="left:756px;top:413px;width:157px;height:27px;border-left:1px solid #fff;border-top:1px solid #fff;border-right:1px solid #696969;box-shadow:inset -1px 0 #a0a0a0;border-radius:2px 2px 0 0"></div>
<div style="left:599px;top:413px;width:159px;height:27px;border-left:1px solid #fff;border-top:1px solid #fff;border-right:1px solid #696969;box-shadow:inset -1px 0 #a0a0a0;border-radius:2px 2px 0 0"></div>
<div style="left:456px;top:413px;width:145px;height:28px;background:#f0f0f0;border-left:1px solid #fff;border-top:1px solid #fff;border-right:1px solid #696969;box-shadow:inset -1px 0 #a0a0a0;border-radius:2px 2px 0 0"></div>
<span class="t" style="left:506.22px;top:420px;font-size:12.53px;line-height:12.53px;color:#000;font-weight:normal;transform:scaleX(0.9281);transform-origin:0 0;">Address</span>
<span class="t" style="left:649.75px;top:422px;font-size:12.53px;line-height:12.53px;color:#f00;font-weight:normal;transform:scaleX(0.9300);transform-origin:0 0;">Cust Notes</span>
<span class="t" style="left:807.80px;top:422px;font-size:12.53px;line-height:12.53px;color:#0000ff;font-weight:normal;transform:scaleX(0.9260);transform-origin:0 0;">Site Notes</span>
<span class="t" style="left:463.60px;top:446px;font-size:12.53px;line-height:12.53px;color:#000;font-weight:normal;transform:scaleX(0.8963);transform-origin:0 0;">A1 Car Wash</span>
<span class="t" style="left:463.60px;top:469px;font-size:12.53px;line-height:12.53px;color:#000;font-weight:normal;transform:scaleX(0.9266);transform-origin:0 0;">558 Princes Highway</span>
<div class="rz" style="left:713px;top:444px;width:24px;height:18px;"></div>
<svg style="position:absolute;left:0;top:0;overflow:visible" width="1" height="1"><circle cx="725" cy="455.5" r="5.6" fill="none" stroke="#000" stroke-width="2.7"/><line x1="729.032" y1="459.532" x2="732.6320000000001" y2="463.132" stroke="#000" stroke-width="3" stroke-linecap="round"/></svg>
<div class="dith" style="left:722px;top:465px;width:17px;height:71px"></div>
<div class="rz" style="left:722px;top:465px;width:15px;height:16px;"></div>
<div class="rz" style="left:722px;top:518px;width:15px;height:16px;"></div>
<svg style="position:absolute;left:0;top:0;overflow:visible" width="1" height="1"><polygon points="726.5,476 734.5,476 730.5,472" fill="#a0a0a0"/><polygon points="726.5,525 734.5,525 730.5,529" fill="#a0a0a0"/></svg>
<span class="t" style="left:747.30px;top:445px;font-size:12.53px;line-height:12.53px;color:#000;font-weight:normal;transform:scaleX(0.9279);transform-origin:0 0;">Suburb</span>
<div class="sk" style="left:746px;top:463px;width:147px;height:20px;background:#f0f0f0;"></div>
<div style="left:748px;top:465px;width:145px;height:16px;overflow:hidden"><span class="t" style="left:2.60px;top:4px;font-size:12.53px;line-height:12.53px;color:#000;transform:scaleX(0.8422);transform-origin:0 0;">BAIRNSDALE</span></div>
<span class="t" style="left:747.30px;top:492px;font-size:12.53px;line-height:12.53px;color:#000;font-weight:normal;transform:scaleX(0.8806);transform-origin:0 0;">State</span>
<span class="t" style="left:802.60px;top:492px;font-size:12.53px;line-height:12.53px;color:#000;font-weight:normal;transform:scaleX(0.9063);transform-origin:0 0;">Post Code</span>
<div class="sk" style="left:748px;top:507px;width:50px;height:19px;background:#f0f0f0;"></div>
<div style="left:750px;top:509px;width:48px;height:15px;overflow:hidden"><span class="t" style="left:2.60px;top:4px;font-size:12.53px;line-height:12.53px;color:#000;transform:scaleX(0.8590);transform-origin:0 0;">VIC</span></div>
<div class="sk" style="left:803px;top:507px;width:65px;height:19px;background:#f0f0f0;"></div>
<div style="left:805px;top:509px;width:63px;height:15px;overflow:hidden"><span class="t" style="left:2.30px;top:4px;font-size:12.53px;line-height:12.53px;color:#000;transform:scaleX(0.8667);transform-origin:0 0;">3875</span></div>
<svg style="position:absolute;left:875px;top:511px;overflow:visible" width="17" height="17"><circle cx="8" cy="8.5" r="7.5" fill="#000"/><path d="M4,4 q3,-1 4,1 q-1,2 -3,3 q1,2 0,4 q-2,-2 -2,-5z M10,3 q3,1 4,4 q-2,0 -3,-1z M9,10 q3,-1 4,1 q-1,3 -4,3 q1,-2 0,-4z" fill="#fff"/></svg>
<div class="rz" style="left:9px;top:559px;width:59px;height:29px;"></div>
<span class="t" style="left:22.16px;top:580px;font-size:8.00px;line-height:8.00px;color:#222;font-weight:normal;">C<u>u</u>stomer</span>
<div class="rz" style="left:70px;top:559px;width:55px;height:29px;"></div>
<span class="t" style="left:80.27px;top:580px;font-size:8.00px;line-height:8.00px;color:#222;font-weight:normal;">Product24</span>
<div class="rz" style="left:127px;top:559px;width:50px;height:29px;"></div>
<span class="t" style="left:140.55px;top:580px;font-size:8.00px;line-height:8.00px;color:#222;font-weight:normal;"><u>H</u>istory</span>
<div class="rz" style="left:179px;top:559px;width:47px;height:29px;"></div>
<span class="t" style="left:195.05px;top:580px;font-size:8.00px;line-height:8.00px;color:#222;font-weight:normal;">Not<u>e</u></span>
<div class="rz" style="left:228px;top:559px;width:48px;height:29px;"></div>
<span class="t" style="left:243.66px;top:580px;font-size:8.00px;line-height:8.00px;color:#222;font-weight:normal;">Cop<u>y</u></span>
<div class="rz" style="left:278px;top:559px;width:47px;height:29px;"></div>
<span class="t" style="left:282.94px;top:580px;font-size:8.00px;line-height:8.00px;color:#222;font-weight:normal;">Start Timer</span>
<div class="rz" style="left:327px;top:559px;width:71px;height:29px;"></div>
<span class="t" style="left:340.60px;top:580px;font-size:8.00px;line-height:8.00px;color:#222;font-weight:normal;"><u>M</u>aintenance</span>
<div class="rz" style="left:400px;top:559px;width:55px;height:29px;"></div>
<span class="t" style="left:416.28px;top:580px;font-size:8.00px;line-height:8.00px;color:#222;font-weight:normal;">Order<u>s</u></span>
<div class="rz" style="left:457px;top:559px;width:55px;height:29px;"></div>
<span class="t" style="left:471.49px;top:580px;font-size:8.00px;line-height:8.00px;color:#222;font-weight:normal;">Convert</span>
<div class="rz" style="left:514px;top:559px;width:47px;height:29px;"></div>
<span class="t" style="left:527.61px;top:580px;font-size:8.00px;line-height:8.00px;color:#222;font-weight:normal;">Fi<u>l</u>ters</span>
<svg style="position:absolute;left:30px;top:561px;overflow:visible" width="21" height="21"><rect x="0" y="0" width="20" height="20" rx="2.5" fill="#000"/><circle cx="10" cy="6.8" r="3.3" fill="#eee"/><path d="M3.4,17.2 Q3.6,12.3 10,12.3 Q16.4,12.3 16.6,17.2 Z" fill="#eee"/></svg>
<svg style="position:absolute;left:89px;top:562px;overflow:visible" width="19" height="18"><path d="M1,6 l5,-5 h12 l-5,5z" fill="#000"/><path d="M1,7 h12 v11 h-12z" fill="#000"/><path d="M14,6 l4,-4 v11 l-4,4z" fill="#000"/><rect x="5" y="9.5" width="4" height="1.3" fill="#fff"/><path d="M7,1.5 l-4,4 M12,1.5 l-4,4" stroke="#fff" stroke-width="1"/></svg>
<svg style="position:absolute;left:141px;top:561px;overflow:visible" width="21" height="20"><path d="M4.5,6 A8,8 0 1 1 3,11" fill="none" stroke="#000" stroke-width="2.4"/><polygon points="1,4 7.5,4.5 3,10"/><path d="M11,5.5 v5 l3.5,3" fill="none" stroke="#000" stroke-width="2"/></svg>
<div style="left:193px;top:561px;width:20px;height:20px;background:#fff"></div>
<svg style="position:absolute;left:194px;top:562px;overflow:visible" width="20" height="20"><path d="M2,2 h16 v12 h-13 l-3,3z" fill="#fff" stroke="#000" stroke-width="2.2" stroke-linejoin="round"/><rect x="4.5" y="4.5" width="11" height="7" fill="none" stroke="#000" stroke-width="1"/><path d="M4.5,7.2 h11 M8,4.5 v7" stroke="#000" stroke-width="1.6"/><rect x="12" y="8.5" width="3.5" height="3" fill="#000"/></svg>
<svg style="position:absolute;left:243px;top:560px;overflow:visible" width="21" height="22"><path d="M2.4,15 V2.4 H13.8" fill="none" stroke="#000" stroke-width="2.2"/><rect x="6" y="5.8" width="12.6" height="13.6" rx="1.6" fill="none" stroke="#000" stroke-width="2.2"/></svg>
<svg style="position:absolute;left:292px;top:560px;overflow:visible" width="21" height="22"><rect x="7.2" y="1" width="5.8" height="2" fill="#000"/><circle cx="10" cy="12" r="7.6" fill="none" stroke="#000" stroke-width="2.2"/><path d="M10,5.8 v6.6" stroke="#000" stroke-width="2"/><path d="M16.3,4.2 l1.8,1.8" stroke="#000" stroke-width="2.2"/></svg>
<svg style="position:absolute;left:345px;top:555px;overflow:visible" width="30" height="30"><g transform="translate(0.8,1.5)"><path d="M26.5,5.5 L19,13" stroke="#000" stroke-width="2.4" stroke-linecap="round"/><path d="M26.8,5.2 L24.2,7.8" stroke="#000" stroke-width="3.4" stroke-linecap="round"/><path d="M15,17 L10.5,21.5" stroke="#000" stroke-width="3.6" stroke-linecap="round"/><path d="M12,9 L22,19" stroke="#f0f0f0" stroke-width="5.5"/><path d="M11,8 L23,20" stroke="#000" stroke-width="2.8"/><circle cx="11" cy="8.5" r="3.8" fill="#000"/><circle cx="22.8" cy="20.2" r="3.8" fill="#000"/><rect x="-1.3" y="-3" width="2.6" height="5" fill="#f0f0f0" transform="translate(9.6,7) rotate(-45)"/><rect x="-1.3" y="-2" width="2.6" height="5" fill="#f0f0f0" transform="translate(24.2,21.6) rotate(-45)"/></g></svg>
<svg style="position:absolute;left:410px;top:555px;overflow:visible" width="30" height="30"><path d="M8,7.2 h3.2 l1.8,3" fill="none" stroke="#000" stroke-width="2.2" stroke-linecap="round"/><polygon points="11.5,8 28,8.3 24.2,16.6 13.4,16.6" fill="#000"/><path d="M13.8,16 L12.6,18.4 Q12.2,20 13.8,20 H26" fill="none" stroke="#000" stroke-width="2.1"/><circle cx="14" cy="23.8" r="2" fill="#000"/><circle cx="24" cy="23.8" r="2" fill="#000"/></svg>
<svg style="position:absolute;left:474px;top:560px;overflow:visible" width="22" height="22"><circle cx="11" cy="10.8" r="10.2" fill="#000"/><path d="M8.5,7 v5.5 M13.3,9.5 v5.5" stroke="#fff" stroke-width="2"/><polygon points="5.6,8.6 8.5,5 11.4,8.6" fill="#fff"/><polygon points="10.4,13.6 13.3,17.2 16.2,13.6" fill="#fff"/></svg>
<svg style="position:absolute;left:528px;top:561px;overflow:visible" width="21" height="21"><path d="M0,0 h20 v3 l-7,7 v8 l-6,3 v-11 l-7,-7z" fill="#000"/></svg>
<div style="left:681px;top:567px;width:13px;height:13px;border:2px solid #5f5f5f;background:#fff"></div>
<span class="t" style="left:697.20px;top:567px;font-size:12.00px;line-height:12.00px;color:#000;font-weight:bold;transform:scaleX(0.9923);transform-origin:0 0;">Quote</span>
<span class="t" style="left:843.70px;top:558px;font-size:11.30px;line-height:11.30px;color:#0000ff;font-weight:bold;transform:scaleX(0.9943);transform-origin:0 0;-webkit-text-stroke:0.6px #0000ff">Total (Ex Tax)</span>
<span class="t" style="left:864.50px;top:574px;font-size:12.53px;line-height:12.53px;color:#f00;font-weight:normal;transform:scaleX(0.8565);transform-origin:0 0;">$100.00</span>
</body></html>
